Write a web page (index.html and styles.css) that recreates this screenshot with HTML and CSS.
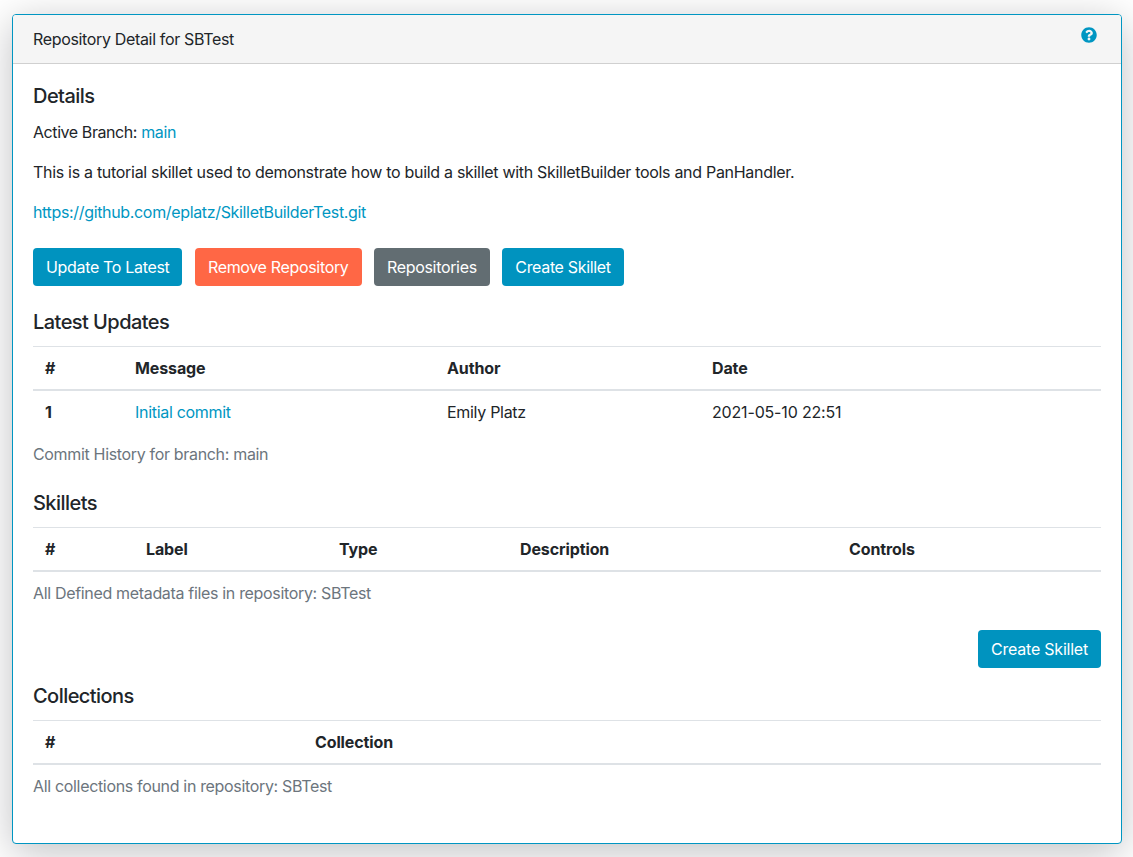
FILE: index.html
```html
<!DOCTYPE html>
<html lang="en">
<head>
<meta charset="utf-8">
<title>Repository Detail for SBTest</title>
<link rel="stylesheet" href="styles.css">
</head>
<body>
<main class="card">
  <header class="card-header">
    <span class="title">Repository Detail for SBTest</span>
    <a class="help" href="#" aria-label="Help">
      <svg viewBox="0 0 512 512" width="16" height="16"><path fill="currentColor" d="M504 256c0 136.997-111.043 248-248 248S8 392.997 8 256C8 119.083 119.043 8 256 8s248 111.083 248 248zM262.655 90c-54.497 0-89.255 22.957-116.549 63.758-3.536 5.286-2.353 12.415 2.715 16.258l34.699 26.31c5.205 3.947 12.621 3.008 16.665-2.122 17.864-22.658 30.113-35.797 57.303-35.797 20.429 0 45.698 13.148 45.698 32.958 0 14.976-12.363 22.667-32.534 33.976C247.128 238.528 216 254.941 216 296v4c0 6.627 5.373 12 12 12h56c6.627 0 12-5.373 12-12v-1.333c0-28.462 83.186-29.647 83.186-106.667 0-58.002-60.165-102-116.531-102zM256 338c-25.365 0-46 20.635-46 46 0 25.364 20.635 46 46 46s46-20.636 46-46c0-25.365-20.635-46-46-46z"/></svg>
    </a>
  </header>
  <div class="card-body">
    <h5>Details</h5>
    <p class="branch">Active Branch: <a href="#">main</a></p>
    <p>This is a tutorial skillet used to demonstrate how to build a skillet with SkilletBuilder tools and PanHandler.</p>
    <p><a class="repo-url" href="#">https://github.com/eplatz/SkilletBuilderTest.git</a></p>
    <div class="actions">
      <a class="btn btn-primary" href="#">Update To Latest</a>
      <a class="btn btn-danger" href="#">Remove Repository</a>
      <a class="btn btn-secondary" href="#">Repositories</a>
      <a class="btn btn-primary" href="#">Create Skillet</a>
    </div>

    <h5>Latest Updates</h5>
    <table>
      <caption>Commit History for branch: main</caption>
      <colgroup><col class="u1"><col class="u2"><col class="u3"><col></colgroup>
      <thead><tr><th>#</th><th>Message</th><th>Author</th><th>Date</th></tr></thead>
      <tbody><tr><th>1</th><td><a href="#">Initial commit</a></td><td>Emily Platz</td><td class="date">2021-05-10 22:51</td></tr></tbody>
    </table>

    <h5>Skillets</h5>
    <table>
      <caption>All Defined metadata files in repository: SBTest</caption>
      <colgroup><col class="s1"><col class="s2"><col class="s3"><col class="s4"><col></colgroup>
      <thead><tr><th>#</th><th>Label</th><th>Type</th><th>Description</th><th>Controls</th></tr></thead>
    </table>
    <div class="end-actions"><a class="btn btn-primary" href="#">Create Skillet</a></div>

    <h5>Collections</h5>
    <table>
      <caption>All collections found in repository: SBTest</caption>
      <colgroup><col class="c1"><col></colgroup>
      <thead><tr><th>#</th><th>Collection</th></tr></thead>
    </table>
  </div>
</main>
</body>
</html>
```
FILE: styles.css
```css
* { box-sizing: border-box; }
html, body { margin: 0; background: #fff; }
body {
  padding: 14px 11px 0 12px;
  height: 857px;
  overflow: hidden;
  font-family: Inter, "Liberation Sans", sans-serif;
  font-size: 16px;
  line-height: 24px;
  letter-spacing: -0.3px;
  color: #212529;
}
a { color: #0096c2; text-decoration: none; }
.card {
  border: 1px solid #0096c2;
  border-radius: 4px;
  background: #fff;
  box-shadow: 0 8px 40px rgba(0, 8, 16, .25);
}
.card-header {
  display: flex;
  justify-content: space-between;
  align-items: flex-start;
  padding: 12px 24px 12px 20px;
  background: #f5f5f5;
  border-bottom: 1px solid #d0d0d0;
  border-radius: 3px 3px 0 0;
}
.title { letter-spacing: -0.34px; }
.help { display: flex; }
.card-body { padding: 20px; }
h5 {
  margin: 0 0 12px;
  font-size: 20px;
  font-weight: 500;
  line-height: 24px;
  letter-spacing: -0.55px;
}
p { margin: 0 0 16px; }
.branch { letter-spacing: -0.42px; }
.branch a { letter-spacing: -0.3px; }
.repo-url { letter-spacing: -0.34px; }
.actions { display: flex; gap: 12.5px; margin: 24px 0; }
.end-actions { display: flex; justify-content: flex-end; margin: 0 0 16px; }
.btn {
  display: block;
  padding: 6px 12px;
  border: 1px solid transparent;
  border-radius: 4px;
  color: #fff;
  white-space: nowrap;
  letter-spacing: -0.33px;
}
.end-actions .btn { letter-spacing: -0.22px; }
.btn-primary { background: #0093bf; }
.btn-danger { background: #ff6745; }
.btn-secondary { background: #626d72; }
table {
  width: 100%;
  margin-bottom: 16px;
  border-collapse: collapse;
  table-layout: fixed;
}
caption {
  caption-side: bottom;
  padding: 9px 0;
  text-align: left;
  color: #6c757d;
  letter-spacing: -0.33px;
}
th, td {
  padding: 9px 12px;
  text-align: left;
  vertical-align: top;
  font-weight: 400;
  border-top: 1px solid #dee2e6;
}
th { font-weight: 700; letter-spacing: -0.12px; }
thead th { border-bottom: 2px solid #dee2e6; }
tbody th, tbody td { border-top: 0; }
.date { letter-spacing: -0.17px; }
.u1 { width: 90px; }
.u2 { width: 312px; }
.u3 { width: 265px; }
.s1 { width: 101px; }
.s2 { width: 193px; }
.s3 { width: 181px; }
.s4 { width: 329px; }
.c1 { width: 270px; }
```
